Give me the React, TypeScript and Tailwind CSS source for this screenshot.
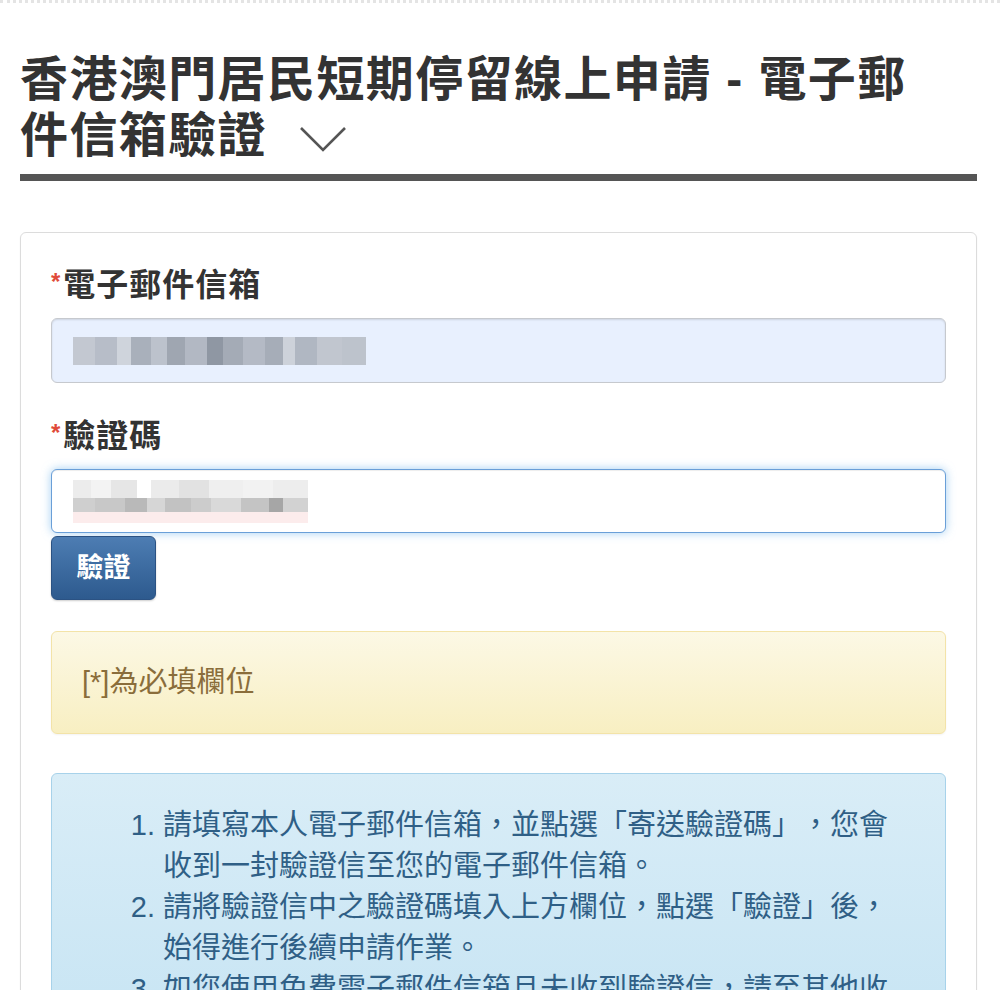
import React from "react";

const font = { fontFamily: '"Liberation Sans", "Noto Sans CJK TC", sans-serif' };

const emailBlocks = [
  "bg-[#c3c8d1] w-[22px]",
  "bg-[#b7bdc8] w-[22px]",
  "bg-[#cfd4dc] w-[14px]",
  "bg-[#a9b0bb] w-[20px]",
  "bg-[#bcc2cc] w-[16px]",
  "bg-[#9fa6b1] w-[18px]",
  "bg-[#b2b8c3] w-[22px]",
  "bg-[#8f97a3] w-[16px]",
  "bg-[#a4abb6] w-[20px]",
  "bg-[#b4bac5] w-[22px]",
  "bg-[#a6adb8] w-[18px]",
  "bg-[#cdd2da] w-[12px]",
  "bg-[#b0b7c2] w-[22px]",
  "bg-[#c1c6cf] w-[25px]",
  "bg-[#bdc3cc] w-[24px]",
];

const codeTop = [
  "bg-[#ececec] w-[18px]",
  "bg-[#f3f3f3] w-[20px]",
  "bg-[#e6e6e6] w-[26px]",
  "bg-[#ffffff] w-[14px]",
  "bg-[#ebebeb] w-[28px]",
  "bg-[#e2e2e2] w-[30px]",
  "bg-[#efefef] w-[34px]",
  "bg-[#f2f2f2] w-[30px]",
  "bg-[#ededed] w-[35px]",
];
const codeMid = [
  "bg-[#cfcfcf] w-[22px]",
  "bg-[#c8c8c8] w-[30px]",
  "bg-[#b9b9b9] w-[22px]",
  "bg-[#d6d6d6] w-[18px]",
  "bg-[#c2c2c2] w-[26px]",
  "bg-[#cccccc] w-[20px]",
  "bg-[#d9d9d9] w-[30px]",
  "bg-[#c4c4c4] w-[28px]",
  "bg-[#a6a6a6] w-[14px]",
  "bg-[#d2d2d2] w-[25px]",
];

export default function App() {
  return (
    <div className="w-[1000px] min-h-[990px] bg-white overflow-hidden [text-spacing-trim:space-all]" style={font}>
      <div className="h-[4px] border-t-[3px] border-dotted border-[#e4e4e4]" />
      <div className="px-[20px] w-[997px]">
        <h1 className="mt-[48px] pb-[10px] border-b-[7px] border-[#555555] text-[48px] leading-[56px] font-bold text-[#333333] tracking-[1.4px]">
          香港澳門居民短期停留線上申請 - 電子郵
          <br />
          <span className="inline-flex items-center">
            件信箱驗證
            <svg width="52" height="30" viewBox="0 0 52 30" className="ml-[30px] mt-[6px]">
              <polyline points="4,4 26,26 48,4" fill="none" stroke="#555555" strokeWidth="2.6" />
            </svg>
          </span>
        </h1>

        <div className="mt-[51px] border border-[#dcdcdc] rounded-[6px] px-[30px] pt-[29px] pb-[40px] shadow-[0_1px_2px_rgba(0,0,0,0.05)]">
          <label className="block text-[32px] leading-[40px] font-bold text-[#333333] tracking-[1px]">
            <span className="text-[#e04a3a] text-[24px] align-[6px] mr-[2px]">*</span>電子郵件信箱
          </label>
          <div className="mt-[13px] h-[65px] rounded-[6px] border border-[#c6c9ce] bg-[#e8f0fe] shadow-[inset_0_1px_2px_rgba(0,0,0,0.12)] flex items-center px-[21px]">
            <div className="flex h-[28px]">
              {emailBlocks.map((c, i) => (
                <div key={i} className={"h-full " + c} />
              ))}
            </div>
          </div>

          <label className="block mt-[30px] text-[32px] leading-[40px] font-bold text-[#333333] tracking-[1px]">
            <span className="text-[#e04a3a] text-[24px] align-[6px] mr-[2px]">*</span>驗證碼
          </label>
          <div className="mt-[13px] h-[64px] rounded-[6px] border border-[#6a9fd8] bg-white shadow-[inset_0_1px_1px_rgba(0,0,0,0.075),0_0_10px_rgba(102,175,233,0.6)] flex items-center px-[21px]">
            <div className="flex flex-col">
              <div className="flex h-[18px]">
                {codeTop.map((c, i) => (
                  <div key={i} className={"h-full " + c} />
                ))}
              </div>
              <div className="flex h-[14px]">
                {codeMid.map((c, i) => (
                  <div key={i} className={"h-full " + c} />
                ))}
              </div>
              <div className="h-[11px] w-[235px] bg-[#fcecec]" />
            </div>
          </div>
          <button className="block mt-[3px] w-[105px] h-[64px] rounded-[6px] border border-[#2b5283] bg-gradient-to-b from-[#4d7db3] to-[#2d5a8e] text-white text-[27px] font-bold shadow-[0_1px_2px_rgba(0,0,0,0.2)]">
            驗證
          </button>

          <div className="mt-[31px] h-[103px] rounded-[6px] border border-[#f3e3a8] bg-gradient-to-b from-[#fcf8e5] to-[#f8efc2] flex items-center px-[30px] shadow-[0_1px_2px_rgba(0,0,0,0.05)]">
            <span className="text-[29px] text-[#8a6d3b] leading-none">[*]為必填欄位</span>
          </div>

          <div className="mt-[39px] rounded-[6px] border border-[#a7d2ea] bg-gradient-to-b from-[#d9edf7] to-[#c4e3f3] pt-[31px] pb-[30px] pl-[76px] text-[#2f5f86]">
            <ol className="list-decimal pl-[35px] w-[776px] text-[29px] leading-[41px]">
              <li>請填寫本人電子郵件信箱，並點選「寄送驗證碼」，您會<br />收到一封驗證信至您的電子郵件信箱。</li>
              <li>請將驗證信中之驗證碼填入上方欄位，點選「驗證」後，<br />始得進行後續申請作業。</li>
              <li>如您使用免費電子郵件信箱且未收到驗證信，請至其他收件匣或垃圾郵件匣確認。</li>
            </ol>
          </div>
        </div>
      </div>
    </div>
  );
}
